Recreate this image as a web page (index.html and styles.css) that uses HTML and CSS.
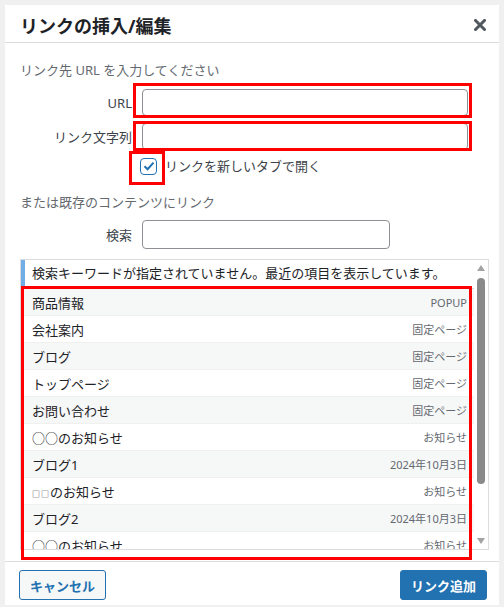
FILE: index.html
```html
<!DOCTYPE html>
<html lang="ja">
<head>
  <meta charset="UTF-8" />
  <meta name="viewport" content="width=device-width, initial-scale=1" />
  <title>リンクの挿入/編集</title>
  <link rel="stylesheet" href="styles.css">
</head>
<body>
  <div class="dialog">
    <header class="dialog-head">
      <h1>リンクの挿入/編集</h1>
      <button class="close" aria-label="閉じる">
        <svg width="12" height="12" viewBox="0 0 12 12"><path d="M1.5 1.5L10.5 10.5M10.5 1.5L1.5 10.5" stroke="#50575e" stroke-width="3" stroke-linecap="square"/></svg>
      </button>
    </header>

    <main class="dialog-body">
      <p class="howto">リンク先 URL を入力してください</p>

      <div class="field">
        <label for="url">URL</label>
        <span class="mark mark-url"><input type="text" id="url" class="text-input" /></span>
      </div>
      <div class="field field-text">
        <label for="link-text">リンク文字列</label>
        <span class="mark mark-text"><input type="text" id="link-text" class="text-input" /></span>
      </div>
      <div class="check-row">
        <span class="mark mark-check">
          <span class="checkbox">
            <svg width="12" height="12" viewBox="0 0 12 12"><path d="M1.5 6.2L4.6 9.2L10.5 2.6" fill="none" stroke="#2271b1" stroke-width="2"/></svg>
          </span>
        </span>
        <span class="check-label">リンクを新しいタブで開く</span>
      </div>

      <p class="howto howto-existing">または既存のコンテンツにリンク</p>

      <div class="field field-search">
        <label for="search">検索</label>
        <input type="search" id="search" class="text-input search-input" />
      </div>

      <div class="results">
        <div class="results-scroll">
          <div class="notice">検索キーワードが指定されていません。最近の項目を表示しています。</div>
          <ul class="items">
            <li><span class="item-title">商品情報</span><span class="item-info">POPUP</span></li>
            <li><span class="item-title">会社案内</span><span class="item-info">固定ページ</span></li>
            <li><span class="item-title">ブログ</span><span class="item-info">固定ページ</span></li>
            <li><span class="item-title">トップページ</span><span class="item-info">固定ページ</span></li>
            <li><span class="item-title">お問い合わせ</span><span class="item-info">固定ページ</span></li>
            <li><span class="item-title">○○のお知らせ</span><span class="item-info">お知らせ</span></li>
            <li><span class="item-title">ブログ1</span><span class="item-info">2024年10月3日</span></li>
            <li><span class="item-title"><span class="tofu">□□</span>のお知らせ</span><span class="item-info">お知らせ</span></li>
            <li><span class="item-title">ブログ2</span><span class="item-info">2024年10月3日</span></li>
            <li><span class="item-title">○○のお知らせ</span><span class="item-info">お知らせ</span></li>
          </ul>
        </div>
        <div class="scrollbar">
          <span class="arrow arrow-up"></span>
          <span class="thumb"></span>
          <span class="arrow arrow-down"></span>
        </div>
      </div>
    </main>

    <footer class="dialog-foot">
      <button class="btn btn-secondary">キャンセル</button>
      <button class="btn btn-primary">リンク追加</button>
    </footer>
  </div>
</body>
</html>
```

FILE: styles.css
```css
* { box-sizing: border-box; }
body {
  margin: 0;
  padding: 5px 5px 4px;
  background-color: #f0f0f1;
  font-family: "Noto Sans", "Noto Sans CJK JP", sans-serif;
  font-size: 13px;
  color: #2c3338;
}
.dialog {
  background-color: #fff;
  display: flex;
  flex-direction: column;
}
.dialog-head {
  height: 38px;
  display: flex;
  align-items: center;
  justify-content: space-between;
  padding: 2px 13px 0 15px;
  border-bottom: 1px solid #dcdcde;
}
.dialog-head h1 {
  margin: 0;
  font-size: 18px;
  font-weight: bold;
  color: #1d2327;
}
.close {
  border: none;
  background: none;
  padding: 0;
  width: 12px;
  height: 12px;
  display: flex;
  cursor: pointer;
}
.dialog-body {
  padding: 18px 10px 11px 15px;
}
.howto {
  margin: 0 0 10px;
  line-height: 18px;
  color: #646970;
}
.howto-existing {
  margin: 18px 0 0;
}
.field {
  display: grid;
  grid-template-columns: 112px 326px;
  column-gap: 10px;
  align-items: center;
  margin-bottom: 7px;
}
.field label {
  text-align: right;
  color: #3c434a;
}
.text-input {
  display: block;
  width: 100%;
  height: 27px;
  border: 1px solid #8c8f94;
  border-radius: 4px;
  background-color: #fff;
  font: inherit;
}
.field-search {
  grid-template-columns: 112px 248px;
  margin: 9px 0 10px;
}
.search-input {
  height: 29px;
}
.mark {
  position: relative;
  display: block;
}
.mark::after {
  content: "";
  position: absolute;
  border: 3px solid #f00;
  pointer-events: none;
}
.mark-url::after { left: -9px; right: -4px; top: -6px; bottom: -2px; }
.mark-text::after { left: -9px; right: -4px; top: -2px; bottom: -1px; }
.mark-check::after { left: -11px; right: -8px; top: -7px; bottom: -10px; }
.check-row {
  display: flex;
  align-items: center;
  gap: 8px;
  padding-left: 120px;
  margin-top: 5px;
  line-height: 18px;
  color: #3c434a;
}
.checkbox {
  width: 17px;
  height: 17px;
  border: 1.5px solid #2271b1;
  border-radius: 4px;
  display: flex;
  align-items: center;
  justify-content: center;
}
.results {
  position: relative;
  display: flex;
  height: 291px;
  border: 1px solid #dcdcde;
}
.results::after {
  content: "";
  position: absolute;
  left: 0;
  right: 16px;
  top: 26px;
  bottom: -11px;
  border: 3px solid #f00;
  pointer-events: none;
}
.results-scroll {
  flex: 1;
  overflow: hidden;
}
.notice {
  border-left: 4px solid #72aee6;
  border-bottom: 1px solid #dcdcde;
  padding: 4px 0 6px 7px;
  line-height: 18px;
  color: #1d2327;
}
.items {
  list-style: none;
  margin: 0;
  padding: 0;
}
.items li {
  height: 27px;
  display: flex;
  align-items: center;
  justify-content: space-between;
  padding: 0 7px 0 11px;
  border-bottom: 1px solid #f0f0f1;
  color: #1d2327;
}
.items li:nth-child(odd) {
  background-color: #f6f7f7;
}
.item-info {
  font-size: 11px;
  color: #646970;
}
.tofu {
  font-size: 8px;
  letter-spacing: 1px;
}
.scrollbar {
  width: 14px;
  display: flex;
  flex-direction: column;
  align-items: center;
}
.arrow {
  width: 0;
  height: 0;
  border-left: 4.5px solid transparent;
  border-right: 4.5px solid transparent;
}
.arrow-up {
  margin-top: 5px;
  border-bottom: 6px solid #a3a3a3;
}
.arrow-down {
  margin: auto 0 5px;
  border-top: 6px solid #a3a3a3;
}
.thumb {
  margin-top: 7px;
  width: 8px;
  height: 206px;
  border-radius: 4px;
  background-color: #8a8a8a;
}
.dialog-foot {
  display: flex;
  justify-content: space-between;
  padding: 8px 12px 5px 14px;
  border-top: 1px solid #dcdcde;
}
.btn {
  width: 87px;
  height: 30px;
  border-radius: 3px;
  border: 1px solid #2271b1;
  font: inherit;
  font-weight: bold;
  cursor: pointer;
}
.btn-secondary {
  background-color: #f6f7f7;
  color: #2271b1;
}
.btn-primary {
  background-color: #2271b1;
  color: #fff;
}
```
